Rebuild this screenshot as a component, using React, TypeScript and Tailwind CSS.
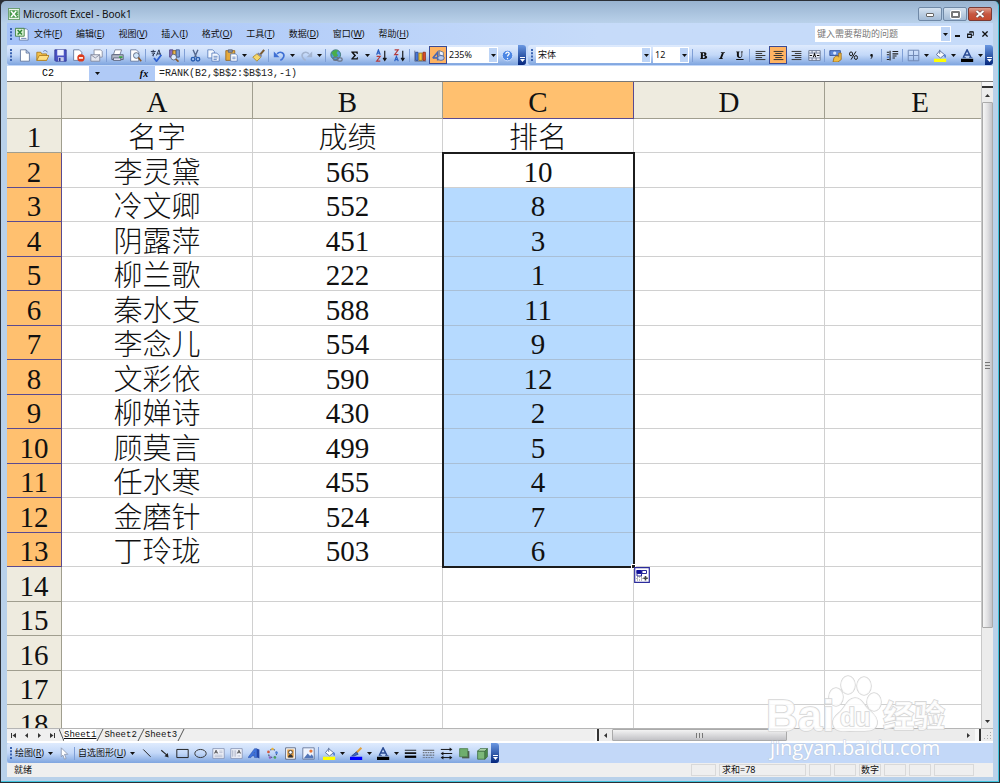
import React from "react";

type IconName = keyof typeof icons;

const icons = {
  create: <path d="M3 1h7l4 4v10H3z M10 1v4h4" fill="#fff" stroke="#5a6f96" />,
  open: (
    <g>
      <path d="M1 4h5l1 2h6v8H1z" fill="#f3c04a" stroke="#a9761a" />
      <path d="M1 14l3-6h12l-3 6z" fill="#ffdf83" stroke="#a9761a" />
      <path d="M9 3c2-2 4-1 5 1" fill="none" stroke="#4a6aa8" />
    </g>
  ),
  save: (
    <g>
      <path d="M1 1h14v14H2l-1-1z" fill="#4b53c4" stroke="#2e3590" />
      <path d="M4 1h8v7H4z" fill="#eef2ff" />
      <path d="M5 10h7v5H5z" fill="#c5cbea" />
      <path d="M6 11h2v4H6z" fill="#2e3590" />
    </g>
  ),
  permission: (
    <g>
      <path d="M2 1h7l3 3v10H2z" fill="#fff" stroke="#5a6f96" />
      <circle cx="11" cy="11" r="4.500" fill="#dc3a1c" />
      <path d="M8.500 11h5" stroke="#fff" strokeWidth="2" />
    </g>
  ),
  mail: (
    <g>
      <path d="M5 1h8l2 2v7H5z" fill="#fff" stroke="#7c8398" />
      <path d="M1 7h11v8H1z" fill="#e4e6ee" stroke="#7c8398" />
      <path d="M1 7l5.500 4L12 7" fill="none" stroke="#7c8398" />
    </g>
  ),
  print: (
    <g>
      <path d="M5 1h8l-2 6H3z" fill="#fff" stroke="#6b7590" />
      <path d="M1 7h14v6H1z" fill="#b4bac8" stroke="#4e566c" />
      <path d="M3 11h9v3H3z" fill="#eef" stroke="#4e566c" />
      <path d="M10 9h4v2h-4z" fill="#31a33a" />
    </g>
  ),
  preview: (
    <g>
      <path d="M2 1h7l3 3v11H2z" fill="#fff" stroke="#5a6f96" />
      <circle cx="9" cy="8" r="3.500" fill="#cfe6fb" stroke="#4d5870" />
      <path d="M11.500 10.500L15 15" stroke="#8a5a2a" strokeWidth="2" />
    </g>
  ),
  spelling: (
    <g fill="none" stroke="#27324e" strokeWidth="1.200">
      <path d="M1 3h6M4 1v2M2 5h4L3 8M4 6v3M8 8l3-7 2 7M9 6h4" />
      <path d="M5 11l3 4 6-8" stroke="#2d5fd0" strokeWidth="2.200" />
    </g>
  ),
  research: (
    <g>
      <path d="M2 1h4v9H2z" fill="#8a6fc0" stroke="#4e3d7c" />
      <path d="M6 2h4v8H6z" fill="#e8b64a" stroke="#8d6420" />
      <path d="M10 1h4v9h-4z" fill="#7fa0d8" stroke="#3a5288" />
      <circle cx="7" cy="10" r="3.500" fill="#dcebff" stroke="#4d5870" />
      <path d="M9.500 12.500L13 15.500" stroke="#8a5a2a" strokeWidth="2" />
    </g>
  ),
  cut: (
    <g fill="none" stroke="#2b5fb0" strokeWidth="1.700">
      <path d="M5 1l4 9M11 1L7 10" stroke="#54688e" />
      <circle cx="5" cy="12.500" r="2.200" />
      <circle cx="11" cy="12.500" r="2.200" />
    </g>
  ),
  copy: (
    <g fill="#f5f9ff" stroke="#5479ba">
      <path d="M1 1h6l2 2v8H1z" />
      <path d="M6 5h6l3 3v7H6z" />
      <path d="M8 9h5M8 11h5M8 13h4" />
    </g>
  ),
  paste: (
    <g>
      <path d="M1 2h11v12H1z" fill="#e5a93c" stroke="#94631a" />
      <path d="M4 1h5v3H4z" fill="#8d96aa" stroke="#555f78" />
      <path d="M7 6h6l2 2v7H7z" fill="#fff" stroke="#5479ba" />
      <path d="M9 10h4M9 12h4" stroke="#5479ba" />
    </g>
  ),
  brush: (
    <g>
      <path d="M15 1l-5 6" stroke="#7b5a30" strokeWidth="2.500" />
      <path d="M6 6l5 4-5 5-5-5z" fill="#f4d66a" stroke="#a98322" />
      <path d="M7 5l5 4" stroke="#7a83a0" strokeWidth="2" />
    </g>
  ),
  undo: (
    <g>
      <path d="M5 6c4-4 10-1 8 4-1 2-2 3-4 4" fill="none" stroke="#3f70d4" strokeWidth="2" />
      <path d="M1 3v7h7z" fill="#3f70d4" />
    </g>
  ),
  redo: (
    <g>
      <path d="M11 6C7 2 1 5 3 10c1 2 2 3 4 4" fill="none" stroke="#a3b4d0" strokeWidth="2" />
      <path d="M15 3v7H8z" fill="#a3b4d0" />
    </g>
  ),
  link: (
    <g>
      <circle cx="7" cy="7" r="6" fill="#4f9bd8" stroke="#356c62" />
      <path d="M2 5c3-5 6-4 8-3l-2 3 2 3-4 3-2-3z" fill="#49ad49" />
      <rect x="4" y="10" width="6" height="4" rx="2" fill="none" stroke="#6b7486" strokeWidth="1.500" />
      <rect x="9" y="11" width="6" height="4" rx="2" fill="none" stroke="#6b7486" strokeWidth="1.500" />
    </g>
  ),
  sum: <path d="M4 3h8v3h-1l-1-1.500H7L10 8l-3.500 3.500H10.500l.8-1.500h1L12 13H4v-1l3.500-4L4 4z" fill="#111" />,
  sortAsc: (
    <g fill="none" strokeWidth="1.400">
      <path d="M2 7l2.200-6L6.500 7M3 5h2.500" stroke="#2b5fc0" />
      <path d="M2 9h4.500l-4.500 6h4.500" stroke="#b53a3a" />
      <path d="M12 2v11M10 11l2 3 2-3" stroke="#111" />
    </g>
  ),
  sortDesc: (
    <g fill="none" strokeWidth="1.400">
      <path d="M2 1h4.500L2 7h4.500" stroke="#b53a3a" />
      <path d="M2 15l2.200-6 2.300 6M3 13h2.500" stroke="#2b5fc0" />
      <path d="M12 2v11M10 11l2 3 2-3" stroke="#111" />
    </g>
  ),
  chart: (
    <g>
      <path d="M1 2v13h14" fill="none" stroke="#5b6784" />
      <path d="M2 4h3v10H2z" fill="#4b7de0" stroke="#27448e" />
      <path d="M6 5h4v9H6z" fill="#f5c93c" stroke="#987317" />
      <path d="M11 4h3v10h-3z" fill="#e2502c" stroke="#8e2b12" />
    </g>
  ),
  drawing: (
    <g>
      <path d="M1 11l6-7v10" fill="none" stroke="#4a67b4" strokeWidth="2" />
      <path d="M1 11h8" stroke="#4a67b4" strokeWidth="2" />
      <path d="M9 2l5 2v5l-5-2z" fill="#eef2fb" stroke="#5a6f96" />
      <ellipse cx="11" cy="11" rx="4" ry="3" fill="#b9c9ea" stroke="#46609c" />
    </g>
  ),
  help: (
    <g>
      <circle cx="8" cy="8" r="6.500" fill="#4c86e4" stroke="#dce9ff" />
      <path d="M6 6c0-3 4.500-2.500 4 0-.3 1.300-2 1.500-2 3.200M8 11v1.500" fill="none" stroke="#fff" strokeWidth="1.500" />
    </g>
  ),
  bold: (
    <path
      fillRule="evenodd"
      transform="translate(1.500 1.500) scale(.82)"
      d="M3 3h6c4 0 4.500 4 1.500 4.800C15 8.500 14 13 9.500 13H3v-1h1V4H3zm4 1v3.500c3 .3 3-3.500 0-3.500zm0 4.500V12c4 .3 4-3.800 0-3.500z"
      fill="#111"
    />
  ),
  italic: (
    <path transform="translate(1.500 1.500) scale(.82)" d="M7 3h6v1h-1.500L8.500 12H10v1H4v-1h1.500L8.500 4H7z" fill="#111" />
  ),
  underline: (
    <path
      transform="translate(1.500 1.500) scale(.82)"
      d="M3 2h5v1H7v5c0 3 4 3 4 0V3h-1V2h3v1h-1v5c0 5-8 5-8 0V3H3zM3 13h11v1.500H3z"
      fill="#111"
    />
  ),
  left: <path d="M2 3h12M2 5.500h8M2 8h12M2 10.500h8M2 13h12" stroke="#333" strokeWidth="1.200" />,
  center: <path d="M2 3h12M4 5.500h8M2 8h12M4 10.500h8M2 13h12" stroke="#333" strokeWidth="1.200" />,
  right: <path d="M2 3h12M6 5.500h8M2 8h12M6 10.500h8M2 13h12" stroke="#333" strokeWidth="1.200" />,
  merge: (
    <g fill="none" stroke="#5d6a88">
      <path d="M1 2h14v12H1z" fill="#f2f6ff" />
      <path d="M1 5h14M1 11h14M5 2v3M10 2v3M5 11v3M10 11v3" />
      <path d="M2 8h3M14 8h-3M6.500 10L8 6l1.500 4" stroke="#111" strokeWidth="1.300" />
    </g>
  ),
  currency: (
    <g>
      <path d="M1 2h13v6H1z" fill="#5f89d8" stroke="#2c4b94" />
      <circle cx="7" cy="5" r="2" fill="#dce8ff" />
      <path d="M6 11c2-3 5-3 6-1v-5h3v8l-4 3H5z" fill="#f0bd45" stroke="#98691a" />
    </g>
  ),
  percent: (
    <g fill="none" stroke="#111" strokeWidth="1.200">
      <ellipse cx="5" cy="6" rx="1.900" ry="2.400" />
      <ellipse cx="11" cy="10.500" rx="1.900" ry="2.400" />
      <path d="M11 3L5 13" />
    </g>
  ),
  comma: <path d="M6.500 7a1.600 1.600 0 1 1 3 1.500c0 1.800-1 3-2.500 3.800v-.8c.8-.6 1.200-1.200 1.200-2-.9.200-1.700-.8-1.700-1.500z" fill="#111" />,
  indent: (
    <g stroke="#222" strokeWidth="1.300">
      <path d="M5 2v12M8 3h7M8 6h7M8 8.500h5M8 11h3M1 13h3" />
      <path d="M1 4h3M1 7h3" />
      <path d="M1 10h3" stroke="#2b5fc0" />
    </g>
  ),
  borders: <path d="M1.500 1.500h13v13h-13zM8 1.500v13M1.500 8h13" fill="none" stroke="#7088b4" strokeWidth="1.200" />,
  fill: (
    <g>
      <path d="M7 2l6 5-5 4-5-4z" fill="#f8fafe" stroke="#4f6591" />
      <path d="M7 1v5" stroke="#4f6591" />
      <path d="M13 6c2 1 2 3 1 5-1-1-2-2-1-5z" fill="#3e71d0" />
      <path d="M0 12h15v4H0z" fill="#ffff00" />
    </g>
  ),
  lineColor: (
    <g>
      <path d="M14 1L7 8" stroke="#e0a13c" strokeWidth="2.500" />
      <path d="M8 6l2 3-5 2-3 0z" fill="#3f69c6" stroke="#2a448c" />
      <path d="M0 12h15v4H0z" fill="#0000ff" />
    </g>
  ),
  fontColor: (
    <g>
      <path d="M3 10L7.500 1 12 10M5 7.500h5" fill="none" stroke="#2b4c94" strokeWidth="1.800" />
      <path d="M2 10.500h4M10 10.500h4" stroke="#2b4c94" />
      <path d="M0 12h15v4H0z" fill="#000" />
    </g>
  ),
  pointer: <path d="M4 1l8 8H8l2 5-2 1-2-5-2 2z" fill="#fff" stroke="#8592ad" />,
  line: <path d="M4 3l9 9" stroke="#222" strokeWidth="1.200" />,
  arrow: (
    <g>
      <path d="M4 4l7 6" stroke="#222" strokeWidth="1.300" />
      <path d="M13 13l-5-1.500 4-4z" fill="#222" />
    </g>
  ),
  rect: <path d="M1 3h14v10H1z" fill="none" stroke="#222" strokeWidth="1.200" />,
  oval: <ellipse cx="8" cy="8" rx="7" ry="5" fill="none" stroke="#333" strokeWidth="1.200" />,
  textBox: (
    <g>
      <path d="M1 2h14v12H1z" fill="#f2f4fb" stroke="#8290b0" />
      <path d="M3 8l2-4 2 4M4 7h2" fill="none" stroke="#333" />
      <path d="M9 5h4M9 7h4M3 10h10M3 12h10" stroke="#aab2c6" />
    </g>
  ),
  verticalText: (
    <g>
      <path d="M1 2h14v12H1z" fill="#f2f4fb" stroke="#8290b0" />
      <path d="M9 8l2-4 2 4M10 7h2" fill="none" stroke="#333" />
      <path d="M3 4v8M5 4v8M7 4v8M10 10v2M12 10v2" stroke="#aab2c6" />
    </g>
  ),
  wordArt: (
    <g>
      <path d="M0 13l8-11h3v11H8v-2H5l-1.500 2zM6.500 9H8V6.500z" fill="#3f73dc" fillRule="evenodd" stroke="#2448a0" strokeWidth=".6" />
      <path d="M11 2l3 1v11l-3-1z" fill="#2347a8" />
    </g>
  ),
  diagram: (
    <g>
      <circle cx="8" cy="8" r="5" fill="none" stroke="#4b5a7c" strokeDasharray="2 2" strokeWidth="1.400" />
      <circle cx="8" cy="2.500" r="1.600" fill="#e5b23e" />
      <circle cx="13" cy="7" r="1.600" fill="#4d7fd8" />
      <circle cx="11" cy="13" r="1.600" fill="#4aa35a" />
      <circle cx="5" cy="13" r="1.600" fill="#8c60c2" />
      <circle cx="3" cy="6" r="1.600" fill="#d65a3a" />
    </g>
  ),
  clipArt: (
    <g>
      <path d="M2 1h12v14H2z" fill="#fff" stroke="#4c5670" />
      <path d="M4 3h8v10H4z" fill="#e09b42" />
      <circle cx="8" cy="6.500" r="2.300" fill="#fff" stroke="#333" />
      <path d="M5 13c0-5 6-5 6 0z" fill="#333" />
    </g>
  ),
  picture: (
    <g>
      <path d="M1 1h14v14H1z" fill="#eef4ff" stroke="#5c6c90" />
      <path d="M2 14l5-6 3 3 2-2 2 3v2z" fill="#5276b8" />
      <circle cx="11" cy="5" r="2" fill="#e6763a" />
    </g>
  ),
  lineStyle: (
    <g stroke="#000">
      <path d="M1 4h14" strokeWidth="1" />
      <path d="M1 7.500h14" strokeWidth="2" />
      <path d="M1 12h14" strokeWidth="2.800" />
    </g>
  ),
  dashStyle: (
    <g stroke="#444">
      <path d="M1 4h14" />
      <path d="M1 7h14" strokeDasharray="2 1" />
      <path d="M1 10h14" strokeDasharray="3 1" />
      <path d="M1 13h14" strokeDasharray="1 1" />
    </g>
  ),
  arrowStyle: (
    <g fill="#111" stroke="#111">
      <path d="M1 3h12M3 8h12M2 13h12" strokeWidth="1.200" />
      <path d="M12 1l3 2-3 2zM4 6L1 8l3 2zM12 11l3 2-3 2zM4 11l-3 2 3 2z" strokeWidth=".3" />
    </g>
  ),
  shadow: (
    <g>
      <path d="M5 5h9v9H5z" fill="#4b5a4b" />
      <path d="M2 2h10v10H2z" fill="#6fae6d" stroke="#4c7e4c" />
    </g>
  ),
  cube: (
    <g stroke="#3f6e43">
      <path d="M2 5h9v10H2z" fill="#7cb87a" />
      <path d="M2 5l3-3h9l-3 3z" fill="#b5dcb2" />
      <path d="M11 5l3-3v10l-3 3z" fill="#4b8a4c" />
    </g>
  ),
};

function Icon({ name }: { name: IconName }) {
  return (
    <svg viewBox="0 0 16 16" className="h-[13px] w-[13px]" aria-hidden="true">
      {icons[name]}
    </svg>
  );
}

function Caret() {
  return (
    <svg viewBox="0 0 5 3" className="h-[3px] w-[5px]" aria-hidden="true">
      <path d="M0 0h5L2.500 3z" fill="#111" />
    </svg>
  );
}

function Tool({ name, label, active, menu }: { name: IconName; label: string; active?: boolean; menu?: boolean }) {
  return (
    <>
      <button
        type="button"
        aria-label={label}
        aria-pressed={active}
        className={
          active
            ? "flex h-[18px] w-[18px] shrink-0 items-center justify-center border border-[#3a4a94] bg-[#ffb463]"
            : "flex h-[18px] w-[18px] shrink-0 items-center justify-center"
        }
      >
        <Icon name={name} />
      </button>
      {menu && (
        <button type="button" aria-label={`${label}选项`} className="flex h-[18px] w-[9px] shrink-0 items-center justify-center">
          <Caret />
        </button>
      )}
    </>
  );
}

function Sep() {
  return <span className="mx-px h-[13px] w-px shrink-0 bg-[#7f9fd6]" />;
}

function Handle() {
  return (
    <svg viewBox="0 0 2 12" className="mx-[3px] h-3 w-[2px] shrink-0" aria-hidden="true">
      <path d="M0 0h2v2H0zM0 3.300h2v2H0zM0 6.600h2v2H0zM0 10h2v2H0z" fill="#3a62b0" />
    </svg>
  );
}

function Overflow() {
  return (
    <button
      type="button"
      aria-label="工具栏选项"
      className="flex w-2 shrink-0 flex-col items-center justify-end gap-px self-stretch rounded-r-[3px] bg-linear-to-b from-[#6b98e2] to-[#06257c] pb-[3px]"
    >
      <span className="h-px w-[5px] bg-white" />
      <svg viewBox="0 0 5 3" className="h-[3px] w-[5px]" aria-hidden="true">
        <path d="M0 0h5L2.500 3z" fill="#fff" />
      </svg>
    </button>
  );
}

function Combo({ label, value, className }: { label: string; value: string; className: string }) {
  return (
    <label className={`relative block h-4 shrink-0 ${className}`}>
      <span className="sr-only">{label}</span>
      <select
        className="block h-4 w-full appearance-none bg-white pl-[2px] text-[9px] leading-4 text-[#111] outline-none"
        defaultValue={value}
      >
        <option>{value}</option>
      </select>
      <span className="pointer-events-none absolute inset-y-0 right-0 flex w-[10px] items-center justify-center border border-white bg-[#bdd4f6]">
        <Caret />
      </span>
    </label>
  );
}

const barStyle = "flex items-center rounded-[3px] bg-linear-to-b from-[#dfebfd] via-[#c3d8f8] to-[#7fa5df]";

const menus: [string, string][] = [
  ["文件", "F"],
  ["编辑", "E"],
  ["视图", "V"],
  ["插入", "I"],
  ["格式", "O"],
  ["工具", "T"],
  ["数据", "D"],
  ["窗口", "W"],
  ["帮助", "H"],
];

const columns = ["A", "B", "C", "D", "E", "F", "G", "H"];

const data: string[][] = [
  ["名字", "成绩", "排名"],
  ["李灵黛", "565", "10"],
  ["冷文卿", "552", "8"],
  ["阴露萍", "451", "3"],
  ["柳兰歌", "222", "1"],
  ["秦水支", "588", "11"],
  ["李念儿", "554", "9"],
  ["文彩依", "590", "12"],
  ["柳婵诗", "430", "2"],
  ["顾莫言", "499", "5"],
  ["任水寒", "455", "4"],
  ["金磨针", "524", "7"],
  ["丁玲珑", "503", "6"],
];

const rowNumbers = Array.from({ length: 30 }, (_, i) => i + 1);

function ExcelMark({ className }: { className: string }) {
  return (
    <svg viewBox="0 0 16 16" className={className} aria-hidden="true">
      <path d="M.5.5h15v15H.5z" fill="#e9f6e6" stroke="#3a7d3c" />
      <path d="M2 3h12v10H2z" fill="#4a9a4c" />
      <path d="M4 4l7 8M11 4l-7 8" stroke="#fff" strokeWidth="2" />
      <path d="M12 4h2M12 7h2M12 10h2" stroke="#cfe9cd" />
    </svg>
  );
}

function TitleBar() {
  const box =
    "flex h-[14px] w-6 items-center justify-center rounded-[2px] border border-[#6f88a6] bg-linear-to-b from-[#d5e2f0] to-[#a3bbd6]";
  return (
    <header className="flex h-[22px] shrink-0 items-center gap-[3px] pt-1 pl-px">
      <ExcelMark className="h-3 w-3" />
      <h1 className="text-[10px] leading-[18px] whitespace-pre text-[#111]">Microsoft Excel - Book1</h1>
      <div className="ml-auto flex gap-px pr-px">
        <button type="button" aria-label="最小化" className={box}>
          <span className="mt-[2px] h-[4px] w-2 rounded-[1px] border border-[#666] bg-white" />
        </button>
        <button type="button" aria-label="还原" className={box}>
          <span className="h-[7px] w-[9px] rounded-[1px] border-2 border-[#777] bg-white outline outline-white" />
        </button>
        <button
          type="button"
          aria-label="关闭"
          className="flex h-[14px] w-6 items-center justify-center rounded-[2px] border border-[#7a3a35] bg-linear-to-b from-[#dd9c8c] via-[#c65640] to-[#c4492e]"
        >
          <svg viewBox="0 0 10 8" className="h-2 w-[10px]" aria-hidden="true">
            <path d="M1.500 1l7 6M8.500 1l-7 6" stroke="#6a4747" strokeWidth="3.200" />
            <path d="M1.500 1l7 6M8.500 1l-7 6" stroke="#fff" strokeWidth="1.900" />
          </svg>
        </button>
      </div>
    </header>
  );
}

function MenuBar() {
  return (
    <nav className="flex h-[22px] shrink-0 items-center bg-linear-to-r from-[#a6c3f8] to-[#c6dbf9] to-60%">
      <Handle />
      <svg viewBox="0 0 16 16" className="h-[14px] w-[14px]" aria-hidden="true">
        <path d="M5 2h8l2 2v11H5z" fill="#fff" stroke="#5d77a8" />
        <path d="M.5 1.500h10v9H.5z" fill="#d9f0d4" stroke="#3a7d3c" />
        <path d="M3 3.500l5 5M8 3.500l-5 5" stroke="#2e8434" strokeWidth="1.700" />
        <path d="M7 13h6" stroke="#5d77a8" />
      </svg>
      <div className="ml-[5px] flex gap-[14px]">
        {menus.map(([text, key]) => (
          <button type="button" key={key} className="text-[9px] leading-5 text-[#111]">
            {text}(<u>{key}</u>)
          </button>
        ))}
      </div>
      <label className="ml-auto flex h-4 w-[136px] items-stretch bg-white">
        <span className="sr-only">键入需要帮助的问题</span>
        <input
          className="h-4 min-w-0 flex-1 px-[2px] text-[9px] leading-4 outline-none placeholder:text-[#777]"
          placeholder="键入需要帮助的问题"
        />
        <span className="m-px flex w-[9px] items-center justify-center bg-[#bdd4f6]">
          <Caret />
        </span>
      </label>
      <div className="flex items-center">
        <button type="button" aria-label="最小化工作簿" className="flex h-4 w-3 items-center justify-center">
          <span className="mt-1 h-[2px] w-[5px] bg-[#111]" />
        </button>
        <button type="button" aria-label="还原工作簿" className="flex h-4 w-[14px] items-center justify-center">
          <svg viewBox="0 0 8 8" className="h-[7px] w-[7px]" aria-hidden="true">
            <path d="M3 2V.8h4.300V5H6M3 1.300h4" fill="none" stroke="#111" />
            <path d="M.7 3.500H5v3.800H.7zM.7 4h4" fill="none" stroke="#111" strokeWidth="1.200" />
          </svg>
        </button>
        <button type="button" aria-label="关闭工作簿" className="flex h-4 w-4 items-center justify-center">
          <svg viewBox="0 0 7 7" className="h-[6px] w-[6px]" aria-hidden="true">
            <path d="M.5.5l6 6M6.500.5l-6 6" stroke="#111" strokeWidth="1.500" />
          </svg>
        </button>
      </div>
    </nav>
  );
}

function Toolbars() {
  return (
    <div className="flex h-[21px] shrink-0 items-stretch bg-[#c3d8f8] pb-px">
      <div className={barStyle}>
        <Handle />
        <Tool name="create" label="新建" />
        <Tool name="open" label="打开" />
        <Tool name="save" label="保存" />
        <Tool name="permission" label="权限" />
        <Tool name="mail" label="电子邮件" />
        <Sep />
        <Tool name="print" label="打印" />
        <Tool name="preview" label="打印预览" />
        <Sep />
        <Tool name="spelling" label="拼写检查" />
        <Tool name="research" label="信息检索" />
        <Sep />
        <Tool name="cut" label="剪切" />
        <Tool name="copy" label="复制" />
        <Tool name="paste" label="粘贴" menu />
        <Tool name="brush" label="格式刷" />
        <Sep />
        <Tool name="undo" label="撤消" menu />
        <Tool name="redo" label="恢复" menu />
        <Sep />
        <Tool name="link" label="超链接" />
        <Tool name="sum" label="自动求和" menu />
        <Tool name="sortAsc" label="升序排序" />
        <Tool name="sortDesc" label="降序排序" />
        <Sep />
        <Tool name="chart" label="图表向导" />
        <Tool name="drawing" label="绘图" active />
        <Combo label="显示比例" value="235%" className="w-[51px]" />
        <Tool name="help" label="帮助" />
        <span className="w-[2px]" />
        <Overflow />
      </div>
      <div className={`ml-[2px] min-w-0 flex-1 ${barStyle}`}>
        <Handle />
        <Combo label="字体" value="宋体" className="w-[115px]" />
        <span className="w-[2px]" />
        <Combo label="字号" value="12" className="w-9" />
        <span className="w-[2px]" />
        <Sep />
        <Tool name="bold" label="加粗" />
        <Tool name="italic" label="倾斜" />
        <Tool name="underline" label="下划线" />
        <Sep />
        <Tool name="left" label="左对齐" />
        <Tool name="center" label="居中" active />
        <Tool name="right" label="右对齐" />
        <Tool name="merge" label="合并及居中" />
        <Sep />
        <Tool name="currency" label="货币样式" />
        <Tool name="percent" label="百分比样式" />
        <Tool name="comma" label="千位分隔样式" />
        <Sep />
        <Tool name="indent" label="增加缩进量" />
        <Sep />
        <Tool name="borders" label="边框" menu />
        <Tool name="fill" label="填充颜色" menu />
        <Tool name="fontColor" label="字体颜色" menu />
        <span className="flex-1" />
        <Overflow />
      </div>
    </div>
  );
}

function FormulaBar() {
  return (
    <div className="flex h-[15px] shrink-0 items-stretch bg-[#b0caf6] text-[10px]">
      <input
        aria-label="名称框"
        defaultValue="C2"
        className="w-[82px] bg-white text-center font-['Liberation_Mono',monospace] text-[10px] outline-none"
      />
      <button type="button" aria-label="名称列表" className="flex w-4 items-center justify-center">
        <Caret />
      </button>
      <span className="w-7" />
      <button
        type="button"
        aria-label="插入函数"
        className="flex w-[22px] items-center justify-center font-['Liberation_Serif',serif] text-[10px] leading-[14px] font-bold italic"
      >
        fx
      </button>
      <input
        aria-label="编辑栏"
        defaultValue="=RANK(B2,$B$2:$B$13,-1)"
        className="min-w-0 flex-1 bg-white pl-1 font-['Liberation_Mono',monospace] text-[10px] text-[#222] outline-none"
      />
    </div>
  );
}

function Sheet() {
  return (
    <div className="min-w-0 flex-1 overflow-hidden bg-white">
      <table className="w-[1583px] table-fixed border-separate border-spacing-0 text-center font-['Liberation_Serif','Noto_Sans_CJK_SC',serif] text-[29px] leading-[30px] text-[#111]">
        <colgroup>
          <col className="w-[55px]" />
          <col className="w-[191px]" />
          <col className="w-[190px]" />
          <col className="w-[191px]" />
          <col className="w-[191px]" />
          <col className="w-[191px]" />
          <col className="w-[191px]" />
          <col className="w-[191px]" />
          <col className="w-[192px]" />
        </colgroup>
        <thead>
          <tr className="h-[37px]">
            <th className="border-r border-b border-[#a09e8f] bg-[#eeebdf] p-0" />
            {columns.map((c) => (
              <th
                key={c}
                scope="col"
                className={
                  c === "C"
                    ? "border-r border-b border-[#5a4a90] bg-[#ffc06f] p-0 pt-1 font-normal"
                    : "border-r border-b border-[#a09e8f] bg-[#eeebdf] p-0 pt-1 font-normal"
                }
              >
                {c}
              </th>
            ))}
          </tr>
        </thead>
        <tbody>
          {rowNumbers.map((n) => (
            <tr key={n} className={n % 2 ? "h-[34px]" : "h-[35px]"}>
              <th
                scope="row"
                className={
                  n > 1 && n < 14
                    ? "border-r border-b border-[#5a4a90] bg-[#ffc06f] p-0 pt-[3px] font-normal"
                    : "border-r border-b border-[#a09e8f] bg-[#eeebdf] p-0 pt-[3px] font-normal"
                }
              >
                {n}
              </th>
              {columns.map((c, i) => {
                const text = data[n - 1]?.[i];
                const cjk = i === 0 || n === 1;
                return (
                  <td
                    key={c}
                    className={
                      c === "C" && n > 2 && n < 14
                        ? "border-r border-b border-[#a9bfd6] bg-[#b6daff] p-0 pt-[3px]"
                        : cjk
                          ? "border-r border-b border-[#d0d0d0] p-0 pt-[5px] leading-[28px] font-light"
                          : "relative border-r border-b border-[#d0d0d0] p-0 pt-[3px]"
                    }
                  >
                    {text}
                    {c === "C" && n === 2 && <SelectionFrame />}
                  </td>
                );
              })}
            </tr>
          ))}
        </tbody>
      </table>
    </div>
  );
}

function SelectionFrame() {
  return (
    <div className="pointer-events-none absolute -top-px -left-px z-10 h-[416px] w-[193px] border-2 border-[#1c1c1c]">
      <span className="absolute -right-[3px] -bottom-[3px] h-[5px] w-[5px] border border-white bg-[#1c1c1c]" />
      <svg viewBox="0 0 16 16" className="absolute top-[413px] left-[190px] h-4 w-4" aria-hidden="true">
        <path d="M.7.7h14.600v14.600H.7z" fill="#fff" stroke="#2c2c9c" strokeWidth="1.200" />
        <path d="M3 3.500h4.500v3H3zM8 3.500h4.500v3H8zM3 6.500h4.500v2.500H3z" fill="#fff" stroke="#2c2c9c" />
        <path d="M2.500 3h5v3.500h-5z" fill="#10109a" />
        <path d="M3 10h5v3H3z" fill="none" stroke="#777" strokeDasharray="1 1" />
        <path d="M11.500 9v4.500M9.300 11.200h4.500" stroke="#444" strokeWidth="1.600" />
      </svg>
    </div>
  );
}

function Tri({ d }: { d: string }) {
  return (
    <svg viewBox="0 0 7 7" className="h-[7px] w-[7px]" aria-hidden="true">
      <path d={d} fill="#333" />
    </svg>
  );
}

function VerticalScroll() {
  return (
    <div className="flex w-3 shrink-0 flex-col border-l border-[#c9c9c9] bg-[#ececec]">
      <span className="h-[6px] border-b-2 border-[#333] bg-[#f6f6f6]" />
      <button type="button" aria-label="向上滚动" className="flex h-[14px] items-center justify-center">
        <Tri d="M1 5h5L3.500 2z" />
      </button>
      <div className="flex-1">
        <div className="flex h-[86%] items-center justify-center rounded-[1px] border border-[#aaa] bg-linear-to-r from-[#f6f6f6] via-[#e0e0e2] to-[#c2c2c8]">
          <span className="h-[7px] w-[5px] border-y border-[#777] bg-[linear-gradient(#ddd_2px,#777_2px,#777_3px,#ddd_3px)]" />
        </div>
      </div>
      <button type="button" aria-label="向下滚动" className="flex h-[14px] items-center justify-center">
        <Tri d="M1 2h5L3.500 5z" />
      </button>
    </div>
  );
}

function SheetTabs() {
  const nav = ["M1 1h1v5H1zM6 1v5L2.500 3.500z", "M5 1v5L2 3.500z", "M2 1v5l3-2.500z", "M1 1v5l3.500-2.500zM5 1h1v5H5z"];
  const labels = ["第一张", "上一张", "下一张", "最后一张"];
  return (
    <div className="flex h-[15px] shrink-0 items-stretch border-t border-b-2 border-t-[#b5b5b5] border-b-white bg-[#efefef]">
      <div className="flex w-3/5 items-stretch">
        {nav.map((d, i) => (
          <button type="button" key={d} aria-label={labels[i]} className="flex w-[13px] items-center justify-center">
            <Tri d={d} />
          </button>
        ))}
        <div className="flex items-stretch font-['Liberation_Mono',monospace] text-[9px] leading-3 text-[#111]">
          {["Sheet1", "Sheet2", "Sheet3"].map((name, i) => (
            <React.Fragment key={name}>
              {i === 0 && (
                <svg viewBox="0 0 5 12" className="h-3 w-[5px]" aria-hidden="true">
                  <path d="M0 0l5 12" stroke="#555" />
                </svg>
              )}
              <button type="button" className={i === 0 ? "bg-white underline" : ""}>
                {name}
              </button>
              <svg viewBox="0 0 8 12" className="h-3 w-2" aria-hidden="true">
                <path d="M7 0L1 12" stroke="#555" />
              </svg>
            </React.Fragment>
          ))}
        </div>
        <span className="ml-auto w-1 border-r-2 border-[#333] bg-[#f8f8f8]" />
      </div>
      <div className="flex flex-1 items-stretch bg-[#ececec]">
        <button type="button" aria-label="向左滚动" className="flex w-[13px] items-center justify-center">
          <Tri d="M5 1v5L2 3.500z" />
        </button>
        <div className="flex-1">
          <div className="flex h-3 w-1/2 items-center justify-center rounded-[1px] border border-[#aaa] bg-linear-to-b from-[#f3f3f3] to-[#c2c2c6]">
            <span className="h-[5px] w-[7px] border-x border-[#777] bg-[linear-gradient(90deg,#ddd_2px,#777_2px,#777_3px,#ddd_3px)]" />
          </div>
        </div>
        <button type="button" aria-label="向右滚动" className="flex w-[13px] items-center justify-center">
          <Tri d="M2 1v5l3-2.500z" />
        </button>
        <span className="w-[6px] border-r-2 border-[#333] bg-[#f8f8f8]" />
        <svg viewBox="0 0 12 12" className="h-3 w-3" aria-hidden="true">
          <path d="M9 3h1v1H9zM9 6h1v1H9zM6 6h1v1H6zM9 9h1v1H9zM6 9h1v1H6zM3 9h1v1H3z" fill="#aaa" />
        </svg>
      </div>
    </div>
  );
}

function DrawingBar() {
  return (
    <div className="flex h-5 shrink-0 items-stretch bg-[#c3d8f8]">
      <div className={barStyle}>
        <Handle />
        <button type="button" className="flex items-center gap-1 text-[9px] leading-4 text-[#111]">
          <span>
            绘图(<u>R</u>)
          </span>
          <Caret />
        </button>
        <span className="w-[2px]" />
        <Tool name="pointer" label="选择对象" />
        <Sep />
        <button type="button" className="flex items-center gap-1 pl-[2px] text-[9px] leading-4 text-[#111]">
          <span>
            自选图形(<u>U</u>)
          </span>
          <Caret />
        </button>
        <span className="w-[2px]" />
        <Tool name="line" label="直线" />
        <Tool name="arrow" label="箭头" />
        <Tool name="rect" label="矩形" />
        <Tool name="oval" label="椭圆" />
        <Tool name="textBox" label="文本框" />
        <Tool name="verticalText" label="竖排文本框" />
        <Tool name="wordArt" label="艺术字" />
        <Tool name="diagram" label="组织结构图" />
        <Tool name="clipArt" label="剪贴画" />
        <Tool name="picture" label="图片" />
        <Sep />
        <Tool name="fill" label="填充色" menu />
        <Tool name="lineColor" label="线条颜色" menu />
        <Tool name="fontColor" label="文字颜色" menu />
        <Tool name="lineStyle" label="线型" />
        <Tool name="dashStyle" label="虚线线型" />
        <Tool name="arrowStyle" label="箭头样式" />
        <Tool name="shadow" label="阴影样式" />
        <Tool name="cube" label="三维效果样式" />
        <Overflow />
      </div>
    </div>
  );
}

function StatusBar() {
  const box = "h-3 border border-[#d9d9d9] leading-[10px]";
  return (
    <footer className="flex h-[14px] shrink-0 items-center gap-[3px] bg-[#efefef] pr-[19px] text-[9px] text-[#111]">
      <span className="mr-auto pl-[7px] leading-[14px]">就绪</span>
      <span className={`${box} w-[25px]`} />
      <span className={`${box} w-[87px] pl-[2px]`}>求和=78</span>
      <span className={`${box} w-[22px]`} />
      <span className={`${box} w-[22px]`} />
      <span className={`${box} w-[22px] pl-px`}>数字</span>
      <span className={`${box} w-[22px]`} />
      <span className={`${box} w-[22px]`} />
      <span className={`${box} w-10`} />
    </footer>
  );
}

function Watermark() {
  return (
    <svg
      viewBox="0 0 190 92"
      className="pointer-events-none absolute right-[46px] bottom-[16px] z-20 h-[92px] w-[190px]"
      aria-label="Baidu 经验 jingyan.baidu.com"
    >
      <g fill="#fff" fillOpacity=".85" stroke="#d6d6d6" strokeWidth="1.600" paintOrder="stroke">
        <ellipse cx="74" cy="24" rx="7" ry="9" />
        <ellipse cx="86" cy="12" rx="7" ry="9" />
        <ellipse cx="102" cy="13" rx="7" ry="9" />
        <ellipse cx="112" cy="29" rx="7" ry="9" />
        <path d="M93 25c7 0 9 8 14 12s9 8 8 14c-2 8-10 7-22 7s-20 2-22-7c-1-6 4-9 8-13s7-13 14-13z" />
        <g fontFamily="Liberation Sans, Noto Sans CJK SC, sans-serif" fontWeight="700">
          <text x="4" y="58" fontSize="44">
            Bai
          </text>
          <text x="78" y="53" fontSize="25">
            du
          </text>
          <text x="121" y="54" fontSize="31">
            经验
          </text>
        </g>
      </g>
      <text
        x="8"
        y="82"
        fontSize="20"
        fontFamily="Open Sans, Noto Sans, sans-serif"
        fill="#fff"
        stroke="#bccbe0"
        strokeWidth="1"
        paintOrder="stroke"
      >
        jingyan.baidu.com
      </text>
    </svg>
  );
}

export default function App() {
  return (
    <div className="h-screen bg-[#2b2f36] p-px font-['Noto_Sans','Noto_Sans_CJK_SC',sans-serif]">
      <div className="relative flex h-full flex-col rounded-t-[5px] border-r border-b border-[#3fc3dc] bg-[linear-gradient(#98b3d0,#b9d1ea_22px,#b9d1ea)] pr-[5px] pb-1 pl-[6px]">
        <TitleBar />
        <MenuBar />
        <Toolbars />
        <FormulaBar />
        <div className="flex min-h-0 flex-1 border-t border-[#777]">
          <Sheet />
          <VerticalScroll />
        </div>
        <SheetTabs />
        <DrawingBar />
        <StatusBar />
        <Watermark />
      </div>
    </div>
  );
}
